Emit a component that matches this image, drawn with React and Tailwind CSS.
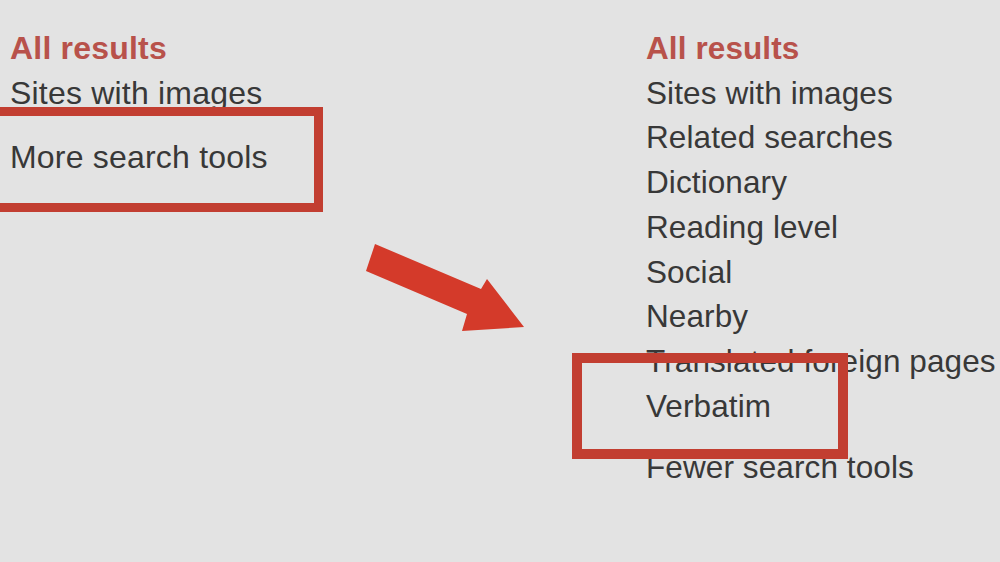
import React from "react";

const font = { fontFamily: '"Liberation Sans", Arial, sans-serif' };

function Item({ children, className = "" }) {
  return <div className={`text-[#383838] ${className}`}>{children}</div>;
}

export default function App() {
  return (
    <div
      className="relative w-[1000px] h-[562px] overflow-hidden bg-[#e3e3e3] leading-[44.7px]"
      style={font}
    >
      <div className="flex pt-[26px]">
        <div className="w-[646px] shrink-0 pl-[10px] flex flex-col text-[32px] tracking-[0.2px]">
          <div className="font-bold text-[#b8524b]">All results</div>
          <Item>Sites with images</Item>
          <Item className="mt-[20px]">More search tools</Item>
        </div>
        <div className="flex flex-col whitespace-nowrap text-[31.5px] tracking-[0.1px]">
          <div className="font-bold text-[#b8524b]">All results</div>
          <Item>Sites with images</Item>
          <Item>Related searches</Item>
          <Item>Dictionary</Item>
          <Item>Reading level</Item>
          <Item>Social</Item>
          <Item>Nearby</Item>
          <Item>Translated foreign pages</Item>
          <Item>Verbatim</Item>
          <Item className="mt-[17px]">Fewer search tools</Item>
        </div>
      </div>

      {/* annotation boxes */}
      <div className="absolute left-[-12px] top-[107px] w-[335px] h-[105px] border-[9px] border-[#c23e31]" />
      <div className="absolute left-[572px] top-[353px] w-[276px] h-[106px] border-[10px] border-[#c23e31]" />

      {/* arrow */}
      <svg
        className="absolute left-0 top-0"
        width="1000"
        height="562"
        viewBox="0 0 1000 562"
      >
        <polygon
          points="375,244 481,289 487,279 524,327 462,331 467,314 366,271"
          fill="#d43a2a"
        />
      </svg>
    </div>
  );
}
